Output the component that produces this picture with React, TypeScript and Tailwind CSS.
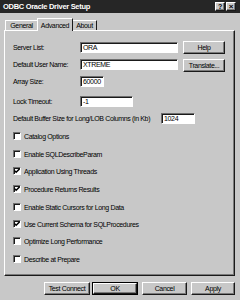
import React from "react";

const raised =
  "bg-[#c8c8c8] border-t border-l border-t-white border-l-white border-r border-b border-r-[#1a1a1a] border-b-[#1a1a1a] shadow-[inset_-1px_-1px_0_#7a7a7a]";
const sunken =
  "bg-white border-t border-l border-t-[#6e6e6e] border-l-[#6e6e6e] border-r border-b border-r-white border-b-white shadow-[inset_1px_1px_0_#1a1a1a]";

function Input({ value, w }: { value: string; w: string }) {
  return (
    <div className={`${sunken} ${w} h-[11px] flex items-center pl-[2px] text-[7px] leading-none`}>
      {value}
    </div>
  );
}

function Btn({ label, w, def }: { label: string; w: string; def?: boolean }) {
  if (def) {
    return (
      <div className={`${w} h-[13px] border border-black flex`}>
        <div className={`${raised} flex-1 flex items-center justify-center text-[7px] leading-none whitespace-nowrap`}>{label}</div>
      </div>
    );
  }
  return (
    <div className={`${raised} ${w} h-[13px] flex items-center justify-center text-[7px] leading-none whitespace-nowrap`}>{label}</div>
  );
}

function Check({ label, checked, mt }: { label: string; checked?: boolean; mt: string }) {
  return (
    <div className={`flex items-center h-[12px] ${mt}`}>
      <div className={`${sunken} w-[8px] h-[8px] flex items-center justify-center`}>
        {checked && (
          <svg width="6" height="6" viewBox="0 0 7 7">
            <path d="M0.5 3 L2.5 5 L6.5 1" stroke="black" strokeWidth="1.6" fill="none" />
          </svg>
        )}
      </div>
      <span className="ml-[3px] text-[7px] leading-none whitespace-nowrap">{label}</span>
    </div>
  );
}

function Row({ label, children, mt }: { label: string; children: React.ReactNode; mt: string }) {
  return (
    <div className={`flex items-center h-[12px] ${mt}`}>
      <span className="w-[67px] text-[7px] leading-none whitespace-nowrap">{label}</span>
      {children}
    </div>
  );
}

export default function App() {
  return (
    <div
      className="w-[240px] h-[300px] bg-[#c8c8c8] text-black overflow-hidden flex flex-col tracking-[-0.35px]"
      style={{ fontFamily: '"Liberation Sans", Arial, sans-serif' }}
    >
      {/* title bar */}
      <div className="h-[13px] bg-[#262626] flex items-center pl-[3px] pr-[4px]">
        <span className="text-white font-bold text-[7.5px] leading-none tracking-[-0.3px]">ODBC Oracle Driver Setup</span>
        <div className="ml-auto flex gap-[1px]">
          <div className={`${raised} w-[10px] h-[9px] flex items-center justify-center text-[7px] font-bold leading-none`}>?</div>
          <div className={`${raised} w-[10px] h-[9px] flex items-center justify-center text-[8px] font-bold leading-none`}>×</div>
        </div>
      </div>

      {/* tabs */}
      <div className="mt-[5px] pl-[5px] flex items-end h-[12px]">
        <div className="h-[10px] w-[32px] border-t border-l border-t-white border-l-white flex items-center justify-center text-[7px] leading-none">
          General
        </div>
        <div className="h-[13px] w-[36px] -mb-[1px] bg-[#c8c8c8] border-t border-l border-r border-t-white border-l-white border-r-[#1a1a1a] flex items-center justify-center text-[7px] leading-none relative z-10">
          Advanced
        </div>
        <div className="h-[10px] w-[24px] border-t border-r border-t-white border-r-[#1a1a1a] flex items-center justify-center text-[7px] leading-none">
          About
        </div>
      </div>

      {/* panel */}
      <div className="ml-[4px] w-[231px] h-[246px] border-t border-l border-t-white border-l-white border-r border-b border-r-[#1a1a1a] border-b-[#1a1a1a] shadow-[inset_-1px_-1px_0_#7a7a7a] pl-[8px] pt-[10px] flex flex-col">
        <div className="flex items-center h-[12px]">
          <span className="w-[67px] text-[7px] leading-none">Server List:</span>
          <Input value="ORA" w="w-[98px]" />
          <div className="ml-[5px]">
            <Btn label="Help" w="w-[42px]" />
          </div>
        </div>
        <div className="flex items-center h-[12px] mt-[5px]">
          <span className="w-[67px] text-[7px] leading-none whitespace-nowrap">Default User Name:</span>
          <Input value="XTREME" w="w-[98px]" />
          <div className="ml-[5px] mt-[3px]">
            <Btn label="Translate..." w="w-[42px]" />
          </div>
        </div>
        <Row label="Array Size:" mt="mt-[5px]">
          <Input value="60000" w="w-[24px]" />
        </Row>
        <Row label="Lock Timeout:" mt="mt-[8px]">
          <Input value="-1" w="w-[53px]" />
        </Row>
        <div className="flex items-center h-[12px] mt-[5px]">
          <span className="w-[148px] text-[7px] leading-none whitespace-nowrap">Default Buffer Size for Long/LOB Columns (in Kb)</span>
          <Input value="1024" w="w-[34px]" />
        </div>
        <Check label="Catalog Options" mt="mt-[6px]" />
        <Check label="Enable SQLDescribeParam" mt="mt-[6px]" />
        <Check label="Application Using Threads" checked mt="mt-[5px]" />
        <Check label="Procedure Returns Results" checked mt="mt-[6px]" />
        <Check label="Enable Static Cursors for Long Data" mt="mt-[6px]" />
        <Check label="Use Current Schema for SQLProcedures" checked mt="mt-[5px]" />
        <Check label="Optimize Long Performance" mt="mt-[5px]" />
        <Check label="Describe at Prepare" mt="mt-[6px]" />
      </div>

      {/* bottom buttons */}
      <div className="mt-[6px] flex pl-[44px]">
        <Btn label="Test Connect" w="w-[46px]" />
        <div className="ml-[2px]">
          <Btn label="OK" w="w-[46px]" def />
        </div>
        <div className="ml-[4px]">
          <Btn label="Cancel" w="w-[45px]" />
        </div>
        <div className="ml-[4px]">
          <Btn label="Apply" w="w-[44px]" />
        </div>
      </div>
    </div>
  );
}
